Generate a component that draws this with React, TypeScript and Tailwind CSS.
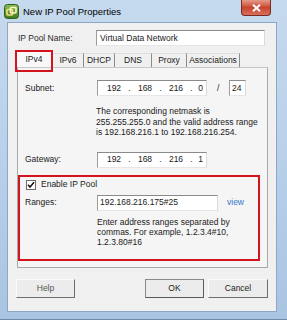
import { ReactNode } from 'react';

function PoolIcon() {
  return (
    <svg width="15" height="15" viewBox="0 0 15 15">
      <defs>
        <linearGradient id="pg" x1="0" y1="0" x2="0" y2="1">
          <stop offset="0" stopColor="#8cc05a" />
          <stop offset="1" stopColor="#3f7a22" />
        </linearGradient>
      </defs>
      <rect x="0.5" y="0.5" width="14" height="14" rx="3" fill="url(#pg)" stroke="#2f5f18" />
      <rect x="3" y="5.5" width="5.5" height="5.5" rx="1" fill="none" stroke="#f3e27c" strokeWidth="1.6" />
      <rect x="6.5" y="3.5" width="5.5" height="5.5" rx="1" fill="none" stroke="#fff6c2" strokeWidth="1.6" />
    </svg>
  );
}

function CheckBox() {
  return (
    <svg width="10" height="10" viewBox="0 0 10 10">
      <rect x="0.5" y="0.5" width="9" height="9" fill="#fff" stroke="#6b6b6b" />
      <path d="M2 4.8 L4 7 L8 2.3" fill="none" stroke="#111" strokeWidth="1.5" />
    </svg>
  );
}

function TextBox({ className, children }: { className: string; children?: ReactNode }) {
  return (
    <div className={`h-[16px] bg-white border border-t-[#8a8a8a] border-l-[#9c9c9c] border-r-[#dadada] border-b-[#e6e6e6] flex items-center ${className}`}>
      {children}
    </div>
  );
}

function IpBox({ parts }: { parts: string[] }) {
  return (
    <TextBox className="w-[110px] pl-[4px]">
      <span className="w-[24px] text-center">{parts[0]}</span>
      <span className="w-[7px] text-center">.</span>
      <span className="w-[24px] text-center">{parts[1]}</span>
      <span className="w-[7px] text-center">.</span>
      <span className="w-[24px] text-center">{parts[2]}</span>
      <span className="w-[7px] text-center">.</span>
      <span className="flex-1 text-center">{parts[3]}</span>
    </TextBox>
  );
}

const tabs = [
  { label: 'IPv6', w: 'w-[31px]' },
  { label: 'DHCP', w: 'w-[31px]' },
  { label: 'DNS', w: 'w-[37px]' },
  { label: 'Proxy', w: 'w-[35px]' },
  { label: 'Associations', w: 'w-[53px]' },
];

export default function App() {
  return (
    <div className="w-[287px] h-[320px] flex flex-col bg-gradient-to-b from-[#c6daee] via-[#b8d0ea] to-[#a9c4e2] border-b border-b-[#6f8aa8] text-[8.5px] leading-none text-[#1a1a1a] font-[family-name:Liberation_Sans,Arial,sans-serif] overflow-hidden">
      {/* Title bar */}
      <div className="h-[22px] flex items-start shrink-0">
        <div className="pl-[4px] pt-[4px]">
          <PoolIcon />
        </div>
        <span className="ml-[4px] mt-[7px] text-[9.5px] text-black">New IP Pool Properties</span>
        <div className="ml-auto mr-[16px] w-[30px] h-[16px] rounded-b-[4px] border border-t-0 border-[#7a2a1f] bg-gradient-to-b from-[#e49a8a] via-[#c9432d] to-[#d8705b] flex items-center justify-center">
          <svg width="9" height="8" viewBox="0 0 9 8">
            <path d="M1 0.8 L8 7.2 M8 0.8 L1 7.2" stroke="#fff" strokeWidth="2" />
          </svg>
        </div>
      </div>

      {/* Client area */}
      <div className="ml-[7px] w-[270px] h-[290px] shrink-0 bg-[#f0f0f0] border border-[#8fa7c2] flex flex-col">
        <div className="mt-[7px] flex items-center">
          <span className="pl-[10px] w-[88px] text-[#2a2a2a]">IP Pool Name:</span>
          <TextBox className="w-[169px] pl-[3px]">Virtual Data Network</TextBox>
        </div>

        {/* Tabs */}
        <div className="mt-[5px] pl-[7px] flex items-end h-[16px]">
          <div className="relative w-[38px] h-[16px] bg-[#f8f8f8] border border-b-0 border-[#b8b8b8] flex items-center justify-center z-10">
            <span className="-mt-[1px]">IPv4</span>
            <div className="absolute -left-[1px] -top-[2px] w-[38px] h-[22px] border-2 border-[#d4141c]" />
          </div>
          {tabs.map((t) => (
            <div key={t.label} className={`${t.w} h-[14px] border-t border-r border-t-[#dedede] border-r-[#8c8c8c] flex items-center justify-center`}>
              {t.label}
            </div>
          ))}
        </div>

        {/* Panel */}
        <div className="ml-[9px] w-[251px] h-[201px] bg-[#f5f5f5] border border-[#a9a9a9] border-t-[#c8c8c8] flex flex-col">
          <div className="mt-[12px] flex items-center">
            <span className="pl-[7px] w-[79px]">Subnet:</span>
            <IpBox parts={['192', '168', '216', '0']} />
            <span className="ml-[10px] w-[12px]">/</span>
            <TextBox className="w-[17px] pl-[2px]">24</TextBox>
          </div>
          <div className="mt-[10px] ml-[78px] leading-[10.5px]">
            The corresponding netmask is<br />
            255.255.255.0 and the valid address range<br />
            is 192.168.216.1 to 192.168.216.254.
          </div>
          <div className="mt-[14px] flex items-center">
            <span className="pl-[7px] w-[79px]">Gateway:</span>
            <IpBox parts={['192', '168', '216', '1']} />
          </div>

          <div className="mt-[7px] w-[242px] h-[86px] border-2 border-[#d4141c] flex flex-col">
            <div className="mt-[3px] pl-[6px] flex items-center">
              <CheckBox />
              <span className="ml-[5px]">Enable IP Pool</span>
            </div>
            <div className="mt-[5px] flex items-center">
              <span className="pl-[5px] w-[77px]">Ranges:</span>
              <TextBox className="w-[121px] pl-[2px]">192.168.216.175#25</TextBox>
              <span className="ml-[9px] text-[#3676c8]">view</span>
            </div>
            <div className="mt-[6px] ml-[77px] leading-[10px]">
              Enter address ranges separated by<br />
              commas. For example, 1.2.3.4#10,<br />
              1.2.3.80#16
            </div>
          </div>
        </div>

        {/* Buttons */}
        <div className="mt-[11px] pl-[8px] flex">
          <button className="w-[59px] h-[19px] bg-[#ececec] border border-t-[#fafafa] border-l-[#fafafa] border-r-[#6e6e6e] border-b-[#6e6e6e] text-[#555]">Help</button>
          <button className="ml-[70px] w-[59px] h-[19px] bg-[#ececec] border border-[#5a5a5a] border-t-[#8a8a8a] border-l-[#8a8a8a] text-[#222]">OK</button>
          <button className="ml-[4px] w-[60px] h-[19px] bg-[#ececec] border border-t-[#fafafa] border-l-[#fafafa] border-r-[#6e6e6e] border-b-[#6e6e6e] text-[#222]">Cancel</button>
        </div>
      </div>
    </div>
  );
}
